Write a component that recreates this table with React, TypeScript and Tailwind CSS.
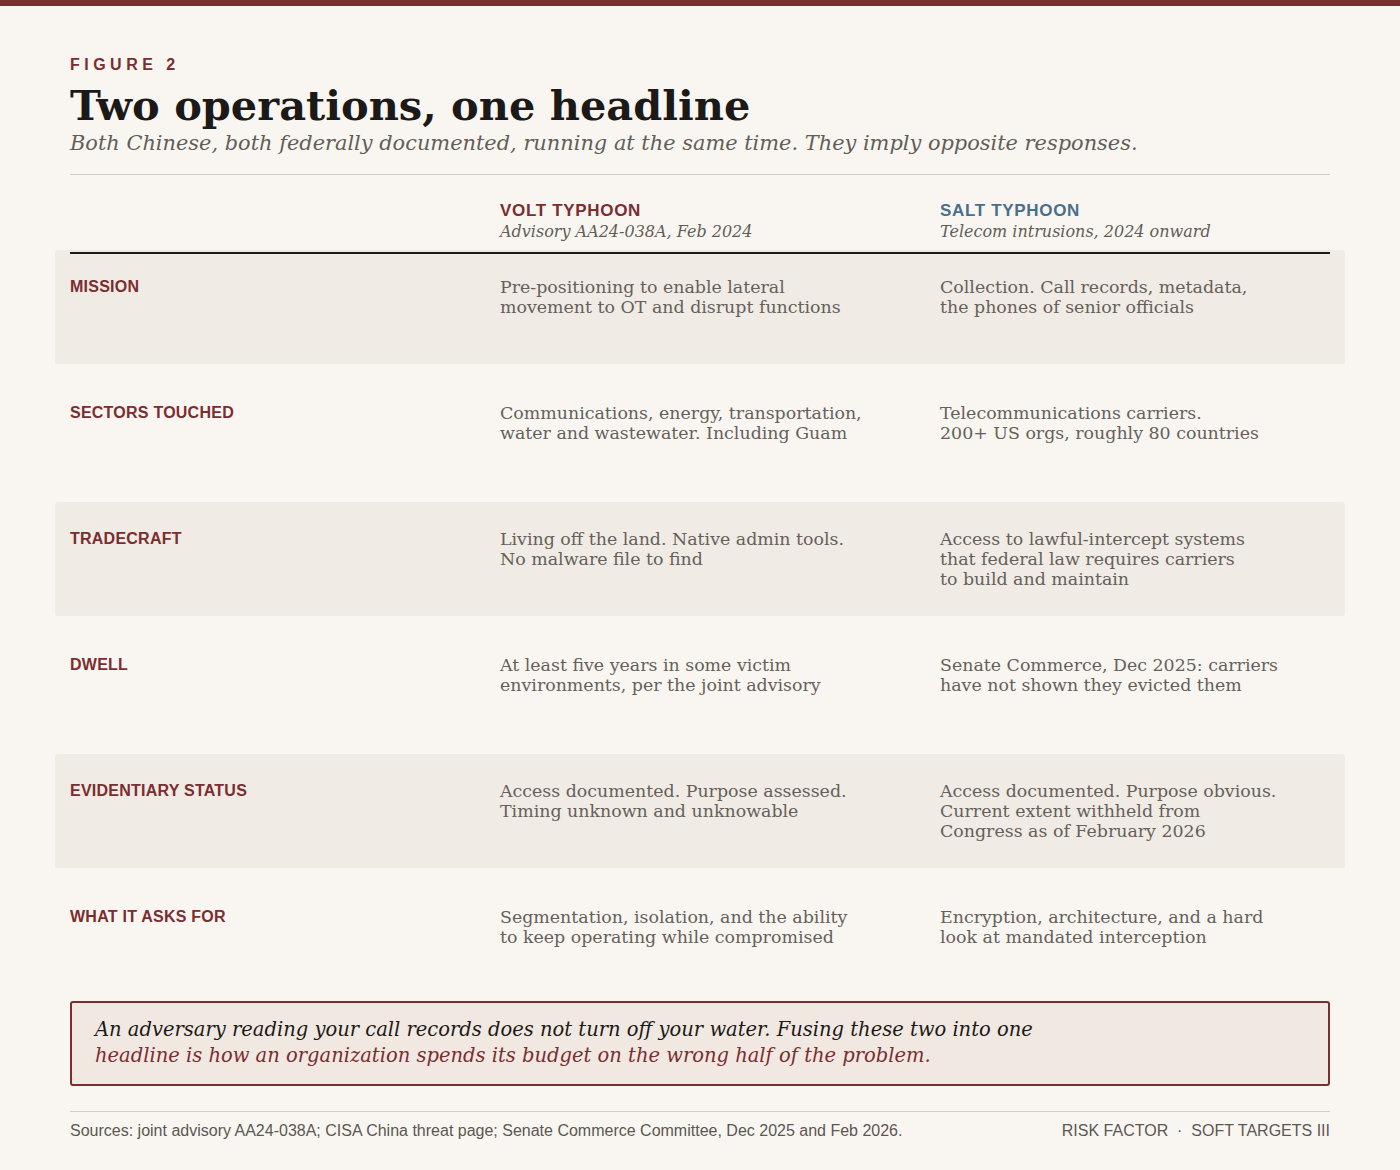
const SERIF = "font-['DejaVu_Serif',serif]";
const SANS = "font-['Liberation_Sans',Arial,sans-serif]";

type Row = {
  label: string;
  volt: string[];
  salt: string[];
};

const ROWS: Row[] = [
  {
    label: "MISSION",
    volt: ["Pre-positioning to enable lateral", "movement to OT and disrupt functions"],
    salt: ["Collection. Call records, metadata,", "the phones of senior officials"],
  },
  {
    label: "SECTORS TOUCHED",
    volt: ["Communications, energy, transportation,", "water and wastewater. Including Guam"],
    salt: ["Telecommunications carriers.", "200+ US orgs, roughly 80 countries"],
  },
  {
    label: "TRADECRAFT",
    volt: ["Living off the land. Native admin tools.", "No malware file to find"],
    salt: [
      "Access to lawful-intercept systems",
      "that federal law requires carriers",
      "to build and maintain",
    ],
  },
  {
    label: "DWELL",
    volt: ["At least five years in some victim", "environments, per the joint advisory"],
    salt: ["Senate Commerce, Dec 2025: carriers", "have not shown they evicted them"],
  },
  {
    label: "EVIDENTIARY STATUS",
    volt: ["Access documented. Purpose assessed.", "Timing unknown and unknowable"],
    salt: [
      "Access documented. Purpose obvious.",
      "Current extent withheld from",
      "Congress as of February 2026",
    ],
  },
  {
    label: "WHAT IT ASKS FOR",
    volt: ["Segmentation, isolation, and the ability", "to keep operating while compromised"],
    salt: ["Encryption, architecture, and a hard", "look at mandated interception"],
  },
];

function Lines({ lines }: { lines: string[] }) {
  return (
    <div className={`${SERIF} text-[17.4px] leading-[20px] text-[#65605b]`}>
      {lines.map((l, i) => (
        <div key={i}>{l}</div>
      ))}
    </div>
  );
}

export default function App() {
  return (
    <div className="min-h-[1170px] bg-[#f9f6f1]">
      <div className="h-[6px] bg-[#7b2d30]" />

      <div className="px-[70px] pt-[50px]">
        {/* Heading */}
        <p className={`${SANS} text-[16px] leading-[18px] font-bold tracking-[0.28em] text-[#7b2d30]`}>
          FIGURE 2
        </p>
        <h1 className={`${SERIF} mt-[8px] text-[41.5px] leading-[48px] font-bold text-[#1c1a18]`}>
          Two operations, one headline
        </h1>
        <p className={`${SERIF} text-[20.9px] leading-[26px] italic text-[#625d58]`}>
          Both Chinese, both federally documented, running at the same time. They imply opposite responses.
        </p>

        <div className="mt-[18px] h-px bg-[#d2ccc6]" />

        {/* Column header */}
        <div className="relative z-10 grid grid-cols-[430px_440px_1fr] pt-[27px] pb-[10px] border-b-2 border-[#1c1a18]">
          <div />
          <div>
            <div className={`${SANS} text-[17px] leading-[18px] font-bold tracking-[0.04em] text-[#7b2d30]`}>
              VOLT TYPHOON
            </div>
            <div className={`${SERIF} mt-[2px] text-[16px] leading-[20px] italic text-[#625d58]`}>
              Advisory AA24-038A, Feb 2024
            </div>
          </div>
          <div>
            <div className={`${SANS} text-[17px] leading-[18px] font-bold tracking-[0.04em] text-[#4a6e8c]`}>
              SALT TYPHOON
            </div>
            <div className={`${SERIF} mt-[2px] text-[16px] leading-[20px] italic text-[#625d58]`}>
              Telecom intrusions, 2024 onward
            </div>
          </div>
        </div>

        {/* Rows */}
        <div className="-mx-[15px] -mt-[4px] flex flex-col gap-[12px]">
          {ROWS.map((row, i) => (
            <div
              key={row.label}
              className={`grid h-[114px] grid-cols-[430px_440px_1fr] rounded-[3px] px-[15px] pt-[27px] ${
                i % 2 === 0 ? "bg-[#f0ebe4]" : ""
              }`}
            >
              <div className={`${SANS} text-[16px] leading-[20px] font-bold tracking-[0.015em] text-[#7b2d30]`}>
                {row.label}
              </div>
              <Lines lines={row.volt} />
              <Lines lines={row.salt} />
            </div>
          ))}
        </div>

        {/* Callout */}
        <div className="mt-[7px] rounded-[3px] border-2 border-[#7b2d30] bg-[#f2e8e2] px-[23px] pt-[14px] pb-[15px]">
          <p className={`${SERIF} text-[19.5px] leading-[26px] italic`}>
            <span className="block text-[#1c1a18]">
              An adversary reading your call records does not turn off your water. Fusing these two into one
            </span>
            <span className="block text-[#7b2d30]">
              headline is how an organization spends its budget on the wrong half of the problem.
            </span>
          </p>
        </div>

        {/* Footer */}
        <div className="mt-[25px] h-px bg-[#d2ccc6]" />
        <div className={`${SANS} flex justify-between pt-[10px] text-[16px] leading-[18px] text-[#5c5752]`}>
          <span>
            Sources: joint advisory AA24-038A; CISA China threat page; Senate Commerce Committee, Dec 2025 and Feb 2026.
          </span>
          <span>RISK FACTOR &nbsp;·&nbsp; SOFT TARGETS III</span>
        </div>
      </div>
    </div>
  );
}
